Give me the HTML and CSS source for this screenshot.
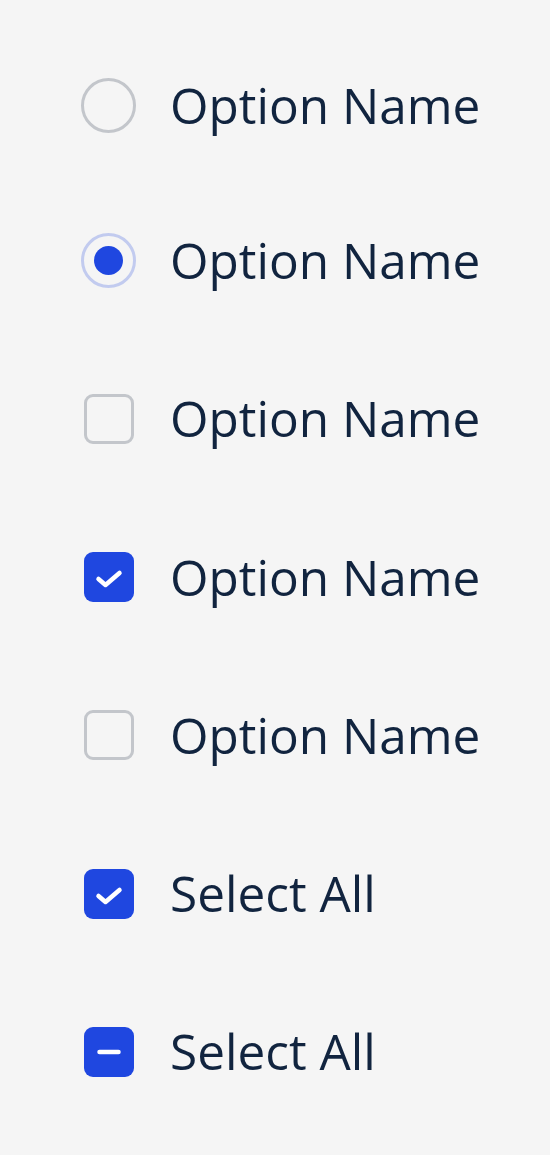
FILE: index.html
```html
<!DOCTYPE html>
<html>
<head>
<meta charset="utf-8">
<link rel="stylesheet" href="styles.css">
</head>
<body>
<div class="list">
  <ul class="group group-radio">
    <li class="row"><span class="ctl"><span class="radio"></span></span><span class="label">Option Name</span></li>
    <li class="row"><span class="ctl"><span class="radio radio-on"><span class="dot"></span></span></span><span class="label">Option Name</span></li>
  </ul>
  <ul class="group group-box">
    <li class="row"><span class="ctl"><span class="box"></span></span><span class="label">Option Name</span></li>
    <li class="row"><span class="ctl"><span class="box box-on"><svg viewBox="0 0 50 50" width="50" height="50"><path d="M14.5 27 L21.5 33 L35.5 21" fill="none" stroke="#fff" stroke-width="4.5" stroke-linecap="round" stroke-linejoin="round"/></svg></span></span><span class="label">Option Name</span></li>
    <li class="row"><span class="ctl"><span class="box"></span></span><span class="label">Option Name</span></li>
    <li class="row"><span class="ctl"><span class="box box-on"><svg viewBox="0 0 50 50" width="50" height="50"><path d="M14.5 27 L21.5 33 L35.5 21" fill="none" stroke="#fff" stroke-width="4.5" stroke-linecap="round" stroke-linejoin="round"/></svg></span></span><span class="label">Select All</span></li>
    <li class="row"><span class="ctl"><span class="box box-on"><svg viewBox="0 0 50 50" width="50" height="50"><path d="M15.5 25 L34.5 25" fill="none" stroke="#fff" stroke-width="4.5" stroke-linecap="round"/></svg></span></span><span class="label">Select All</span></li>
  </ul>
</div>
</body>
</html>
```
FILE: styles.css
```css
html, body {
  margin: 0;
  padding: 0;
  background: #f5f5f5;
}
body {
  font-family: "Open Sans", "Noto Sans", sans-serif;
  color: #11243f;
}
.list {
  padding: 28px 0 0 81px;
  display: flex;
  flex-direction: column;
  gap: 2px;
}
.group {
  list-style: none;
  margin: 0;
  padding: 0;
}
.row {
  height: 158.2px;
  display: flex;
  align-items: center;
  gap: 34px;
}
.group-radio .row {
  height: 155px;
}
.ctl {
  width: 55px;
  height: 55px;
  display: flex;
  align-items: center;
  justify-content: center;
}
.radio {
  box-sizing: border-box;
  width: 55px;
  height: 55px;
  border-radius: 50%;
  border: 3px solid #c3c6cb;
  display: flex;
  align-items: center;
  justify-content: center;
}
.radio-on {
  border-color: #c2cbef;
}
.dot {
  width: 29px;
  height: 29px;
  border-radius: 50%;
  background: #1f47e0;
}
.box {
  box-sizing: border-box;
  width: 50px;
  height: 50px;
  border-radius: 9px;
  border: 3px solid #c3c6cb;
  display: block;
}
.box-on {
  border: none;
  background: #1f47e0;
}
.box svg {
  display: block;
}
.label {
  font-size: 49.5px;
  line-height: 1;
}
```
